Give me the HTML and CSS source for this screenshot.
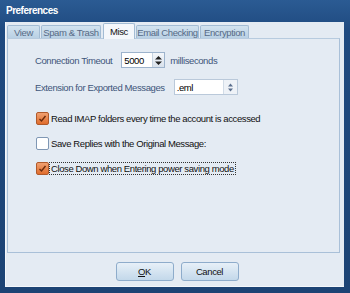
FILE: index.html
```html
<!DOCTYPE html>
<html lang="en">
<head>
    <meta charset="UTF-8">
    <title>Preferences</title>
    <link rel="stylesheet" href="styles.css">
</head>
<body>
    <div class="window">
        <div class="titlebar">Preferences</div>
        <div class="client">
            <div class="tabs">
                <div class="tab">View</div>
                <div class="tab">Spam &amp; Trash</div>
                <div class="tab active">Misc</div>
                <div class="tab">Email Checking</div>
                <div class="tab">Encryption</div>
            </div>
            <div class="panel">
                <div class="row row-timeout">
                    <span class="label">Connection Timeout</span>
                    <div class="spin">
                        <span class="spin-value">5000</span>
                        <span class="spin-btn">
                            <svg width="9" height="11" viewBox="0 0 9 11"><path d="M4.5 1 L8 4.5 H1 Z M4.5 10 L8 6.5 H1 Z" fill="#222"/></svg>
                        </span>
                    </div>
                    <span class="label">milliseconds</span>
                </div>
                <div class="row row-ext">
                    <span class="label">Extension for Exported Messages</span>
                    <div class="combo">
                        <span class="combo-value">.eml</span>
                        <span class="combo-btn">
                            <svg width="7" height="9" viewBox="0 0 7 9"><path d="M3.5 0.5 L6 3.5 H1 Z M3.5 8.5 L6 5.5 H1 Z" fill="#5b6f8e"/></svg>
                        </span>
                    </div>
                </div>
                <div class="checks">
                    <label class="check">
                        <span class="box checked">
                            <svg width="9" height="9" viewBox="0 0 9 9"><path d="M1.5 5 L3.5 7 L7.5 2" fill="none" stroke="#6a2a0a" stroke-width="1.4"/></svg>
                        </span>
                        <span>Read IMAP folders every time the account is accessed</span>
                    </label>
                    <label class="check">
                        <span class="box"></span>
                        <span>Save Replies with the Original Message:</span>
                    </label>
                    <label class="check">
                        <span class="box checked">
                            <svg width="9" height="9" viewBox="0 0 9 9"><path d="M1.5 5 L3.5 7 L7.5 2" fill="none" stroke="#6a2a0a" stroke-width="1.4"/></svg>
                        </span>
                        <span class="focus">Close Down when Entering power saving mode</span>
                    </label>
                </div>
            </div>
            <div class="buttons">
                <button class="btn"><u>O</u>K</button>
                <button class="btn">Cancel</button>
            </div>
        </div>
    </div>
</body>
</html>
```

FILE: styles.css
```css
body {
    margin: 0;
    font-family: "Liberation Sans", Arial, sans-serif;
    font-size: 9.5px;
    letter-spacing: -0.4px;
    background: #1f4678;
}
.window {
    width: 350px;
    height: 293px;
    box-sizing: border-box;
    padding: 0 6px 6px 5px;
    background: linear-gradient(#2b5b93, #1f4a80 30px, #1c4374);
    display: flex;
    flex-direction: column;
}
.titlebar {
    height: 22px;
    line-height: 22px;
    padding-left: 1px;
    color: #fff;
    font-weight: bold;
    font-size: 10px;
    letter-spacing: -0.5px;
}
.client {
    flex: 1;
    background: #e4ebf3;
    border-left: 1px solid #f4f7fb;
    border-bottom: 1px solid #f4f7fb;
    display: flex;
    flex-direction: column;
}
.tabs {
    display: flex;
    align-items: flex-end;
    height: 16px;
    padding-left: 1px;
}
.tab {
    height: 13px;
    line-height: 13px;
    box-sizing: border-box;
    text-align: center;
    white-space: nowrap;
    margin-right: 1px;
    background: linear-gradient(#d2e2ef, #b9d0e4);
    border: 1px solid #a3bcd4;
    border-bottom: none;
    border-radius: 2px 2px 0 0;
    color: #566a86;
}
.tab:nth-child(1) { width: 33px; }
.tab:nth-child(2) { width: 60px; margin-right: 2px; }
.tab.active {
    height: 16px;
    line-height: 15px;
    width: 32px;
    background: #f4f7fb;
    color: #111;
    margin-bottom: -1px;
    position: relative;
    z-index: 1;
}
.tab:nth-child(4) { width: 63px; }
.tab:nth-child(5) { width: 49px; }
.panel {
    height: 215px;
    margin-left: 1px;
    margin-right: 4px;
    border: 1px solid #a9c0d8;
    border-top-color: #b7cbdf;
    padding: 12px 0 0 27px;
    box-sizing: border-box;
}
.row {
    display: flex;
    align-items: center;
}
.row-timeout { height: 18px; }
.row-ext { height: 18px; margin-top: 9px; }
.label {
    color: #3e557a;
}
.spin {
    display: flex;
    align-items: center;
    width: 44px;
    height: 16px;
    margin: 0 5px 0 9px;
    background: #fff;
    border: 1px solid #9db3cc;
    box-sizing: border-box;
}
.spin-value {
    flex: 1;
    padding-left: 2px;
    color: #000;
}
.spin-btn {
    width: 11px;
    height: 14px;
    display: flex;
    align-items: center;
    justify-content: center;
    background: linear-gradient(#f4f7fa, #d9e2ec);
    border-left: 1px solid #c6d3e1;
}
.combo {
    display: flex;
    align-items: center;
    width: 64px;
    height: 16px;
    margin-left: 9px;
    background: #fff;
    border: 1px solid #bac9da;
    box-sizing: border-box;
}
.combo-value {
    flex: 1;
    padding-left: 2px;
    color: #000;
}
.combo-btn {
    width: 13px;
    height: 14px;
    display: flex;
    align-items: center;
    justify-content: center;
    background: #eef2f7;
    border-left: 1px solid #d2dce7;
}
.checks {
    margin-top: 16px;
    display: flex;
    flex-direction: column;
    gap: 12px;
    margin-left: 1px;
}
.check {
    display: flex;
    align-items: center;
    height: 13px;
    color: #111;
}
.box {
    width: 11px;
    height: 11px;
    margin-right: 2px;
    border: 1px solid #7f97b4;
    border-radius: 2px;
    background: #fff;
    display: flex;
    align-items: center;
    justify-content: center;
}
.box.checked {
    background: linear-gradient(#f0a070, #e06c2c);
    border-color: #b0592a;
}
.focus {
    outline: 1px dotted #333;
    outline-offset: 0;
    padding: 0 1px;
    margin-left: -1px;
}
.buttons {
    display: flex;
    justify-content: center;
    gap: 7px;
    margin-top: 9px;
    padding-left: 4px;
}
.btn {
    width: 58px;
    height: 19px;
    padding: 0;
    font-family: inherit;
    font-size: 9.5px;
    letter-spacing: inherit;
    color: #111;
    background: linear-gradient(#e7f0f8, #c3d8ea);
    border: 1px solid #8eaccb;
    border-radius: 3px;
}
```
